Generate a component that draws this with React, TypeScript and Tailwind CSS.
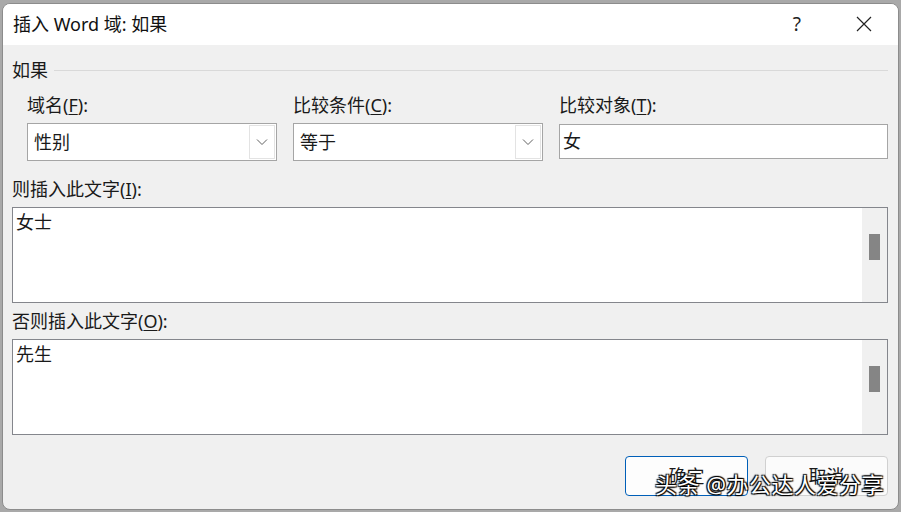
import React from 'react';

const font = "font-['Noto_Sans','Noto_Sans_CJK_SC',sans-serif]";

// label with an underlined access key, e.g. 域名(F):
const Label: React.FC<{ text: string; hotkey: string; className?: string }> = ({ text, hotkey, className = '' }) => (
  <div className={`h-5 leading-5 text-[18px] text-[#1a1a1a] whitespace-nowrap ${className}`}>
    {text}(<span className="underline underline-offset-2">{hotkey}</span>):
  </div>
);

const Chevron = () => (
  <svg width="12" height="8" viewBox="0 0 12 8" fill="none">
    <path d="M1 1.5 L6 6.5 L11 1.5" stroke="#606060" strokeWidth="1" />
  </svg>
);

const Combo: React.FC<{ value: string }> = ({ value }) => (
  <div className="h-[38px] flex items-stretch bg-white border border-[#a5a5a5] p-px">
    <div className="flex-1 flex items-center pl-[5px] text-[18px] text-[#1a1a1a]">{value}</div>
    <div className="w-[26px] flex items-center justify-center border border-[#e3e3e3] bg-white">
      <Chevron />
    </div>
  </div>
);

const TextArea: React.FC<{ value: string }> = ({ value }) => (
  <div className="h-[96px] flex bg-white border border-[#84868c]">
    <div className="flex-1 pl-[3px] pt-[2px] leading-6 text-[18px] text-[#1a1a1a]">{value}</div>
    <div className="w-[25px] bg-[#f0f0f0] flex justify-center pt-[26px]">
      <div className="w-[11px] h-[26px] bg-[#858585]" />
    </div>
  </div>
);

export default function App() {
  return (
    <div className={`w-[901px] h-[512px] bg-[#a9a9a9] pt-[3px] pl-[2px] ${font}`}>
      <div className="relative w-[897px] h-[507px] rounded-[8px] overflow-hidden bg-[#f0f0f0] border border-[#8c8c8c]">
        {/* title bar */}
        <div className="h-[41px] bg-white flex items-center pl-[10px] pr-[14px]">
          <span className="text-[18px] text-[#111] leading-5 -mt-[2px]">插入 Word 域: 如果</span>
          <span className="ml-auto text-[19px] text-[#222] leading-5 mr-[55px] -mt-[2px]">?</span>
          <svg width="16" height="16" viewBox="0 0 16 16" className="mr-[12px] -mt-[2px]">
            <path d="M1 1 L15 15 M15 1 L1 15" stroke="#222" strokeWidth="1.2" />
          </svg>
        </div>

        <div className="px-[9px]">
          {/* group header */}
          <div className="mt-[15px] h-5 flex items-center gap-[6px]">
            <span className="text-[18px] text-[#1a1a1a] leading-5">如果</span>
            <div className="flex-1 h-px bg-[#d9d9d9] mr-[1px]" />
          </div>

          {/* field / comparison / value */}
          <div className="mt-[15px] pl-[15px] grid grid-cols-[250px_250px_329px] gap-x-[16px]">
            <Label text="域名" hotkey="F" />
            <Label text="比较条件" hotkey="C" />
            <Label text="比较对象" hotkey="T" />
            <div className="mt-[8px]"><Combo value="性别" /></div>
            <div className="mt-[8px]"><Combo value="等于" /></div>
            <div className="mt-[9px] h-[35px] bg-white border border-[#a5a5a5] flex items-center pl-[3px] text-[18px] text-[#1a1a1a]">女</div>
          </div>

          <Label text="则插入此文字" hotkey="I" className="mt-[18px]" />
          <div className="mt-[8px] mr-[1px]"><TextArea value="女士" /></div>

          <Label text="否则插入此文字" hotkey="O" className="mt-[8px]" />
          <div className="mt-[8px] mr-[1px]"><TextArea value="先生" /></div>

          {/* dialog buttons */}
          <div className="mt-[21px] flex justify-end gap-[17px] pr-[1px]">
            <button className="w-[123px] h-[40px] rounded-[4px] bg-[#fdfdfd] border border-[#005fb8] text-[18px] text-[#1a1a1a]">确定</button>
            <button className="w-[123px] h-[40px] rounded-[4px] bg-[#fbfbfb] border border-[#d0d0d0] text-[18px] text-[#1a1a1a]">取消</button>
          </div>
        </div>

        {/* watermark */}
        <div className="absolute left-[652px] top-[466px] text-[22px] leading-7 text-white tracking-[0.5px] [text-shadow:1px_1px_1px_#000,-1px_-1px_1px_#000,1px_-1px_1px_#000,-1px_1px_1px_#000]">
          头条 @办公达人爱分享
        </div>
      </div>
    </div>
  );
}
